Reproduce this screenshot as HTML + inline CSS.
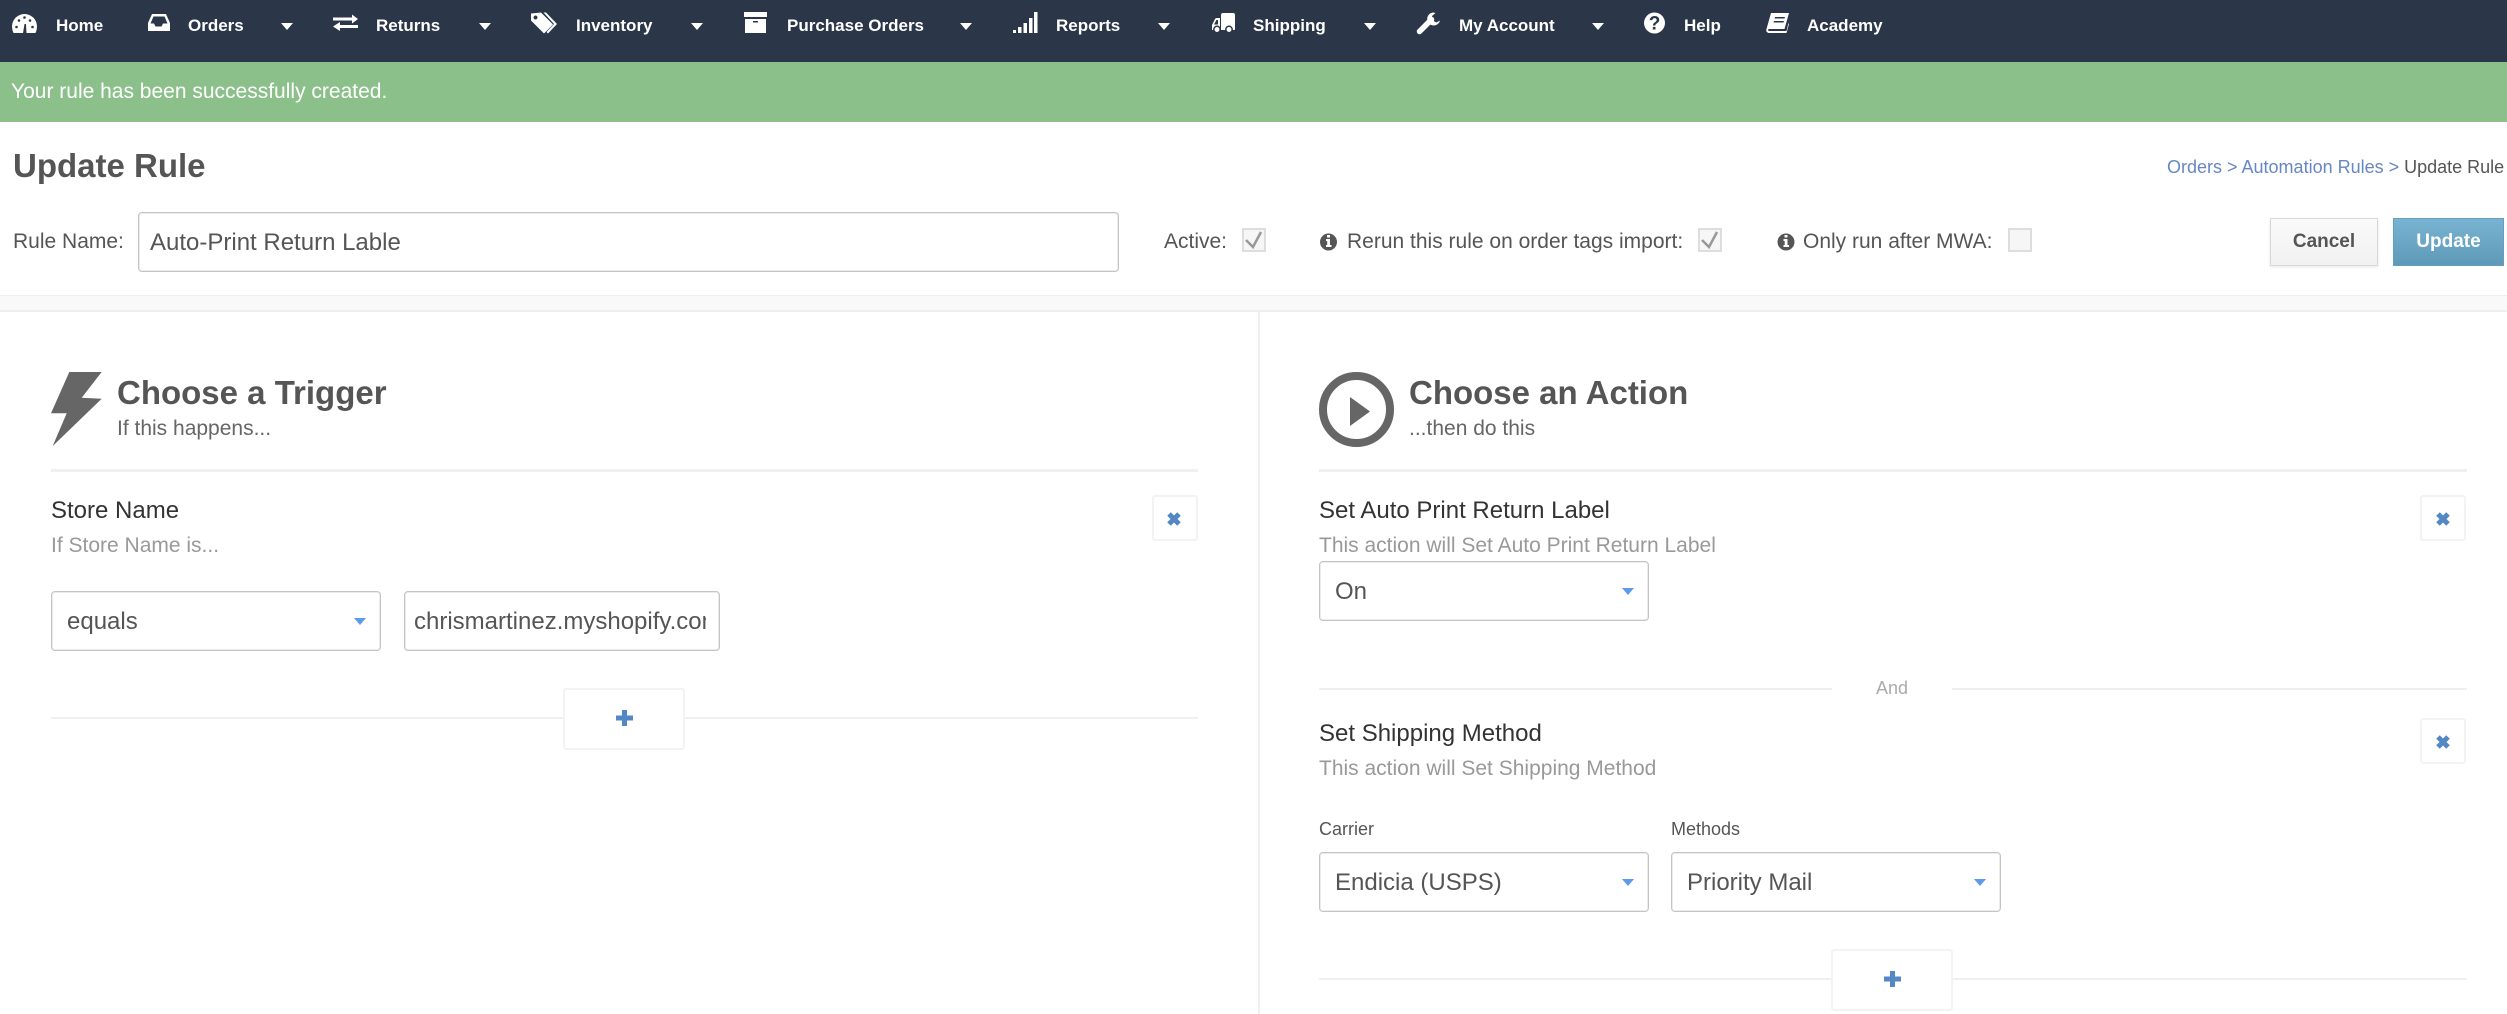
<!DOCTYPE html>
<html><head><meta charset="utf-8"><title>Update Rule</title>
<style>
html,body{margin:0;padding:0;background:#fff;width:2507px;height:1014px;overflow:hidden;font-family:"Liberation Sans",sans-serif;color:#555}
.a{position:absolute;white-space:nowrap}
.n{position:absolute;top:11px;line-height:30px;height:30px;font-size:17px;font-weight:700;color:#fff;white-space:nowrap}
.c{position:absolute;top:23px;width:0;height:0;border-left:6px solid transparent;border-right:6px solid transparent;border-top:7px solid #fff}
.box{position:absolute;box-sizing:border-box;border:1px solid #c4c4c4;box-shadow:inset 0 0 0 1px #ececec;border-radius:4px;background:#fff;font-size:24px;line-height:59px;padding-left:14px;color:#555;overflow:hidden;white-space:nowrap}
.sel{position:absolute;box-sizing:border-box;border:1px solid #c4c4c4;box-shadow:inset 0 0 0 1px #ececec;border-radius:4px;background:#fff;font-size:24px;line-height:59px;padding-left:15px;color:#555;white-space:nowrap;width:330px;height:60px}
.sel:after{content:"";position:absolute;right:14px;top:26px;width:0;height:0;border-left:6px solid transparent;border-right:6px solid transparent;border-top:7px solid #5b9bea}
.cb{position:absolute;box-sizing:border-box;top:228px;width:24px;height:24px;border:2px solid #ddd;background:#f6f6f6}
.t{font-size:24px;color:#333;line-height:30px}
.s{font-size:21px;color:#999;line-height:30px}
.h{font-size:33px;font-weight:700;color:#555;line-height:40px}
.sub{font-size:21px;color:#666;line-height:30px}
.l{font-size:21px;color:#555;line-height:30px}
.hr{position:absolute;background:#f0f0f0}
.xb{position:absolute;box-sizing:border-box;width:46px;height:46px;border:2px solid #f3f3f3;border-radius:3px;background:#fff}
.pb{position:absolute;box-sizing:border-box;width:122px;height:62px;border:2px solid #f3f3f3;border-radius:3px;background:#fff}
</style></head><body>

<div class="a" style="left:0;top:0;width:2507px;height:62px;background:#2b3648"></div>
<svg class="a" style="left:0;top:0" width="2507" height="62" viewBox="0 0 2507 62" fill="#fff">
<!-- home gauge -->
<path d="M13.500 33q-1.500-3-1.500-6.500a12.500 12.500 0 0 1 25 0q0 3.500-1.500 6.500z"/>
<g fill="#2b3648"><circle cx="16.500" cy="27" r="1.300"/><circle cx="19" cy="20.500" r="1.300"/><circle cx="24.500" cy="17.500" r="1.300"/><circle cx="30" cy="20.500" r="1.300"/><circle cx="32.500" cy="27" r="1.300"/><path d="M23 33l1.500-9h1.500l.5 9z"/></g>
<!-- inbox -->
<path d="M152 14h14l4 9v8h-22v-8z"/><path fill="#2b3648" d="M153.500 16.500h11l3 7h-4.500l-1.500 3h-6l-1.500-3h-3.500z"/>
<!-- exchange -->
<path d="M333 17.500h19v-3l6 4.500-6 4.500v-3h-19zM358 25h-18v-3l-7 4.500 7 4.500v-3h18z"/>
<!-- tags -->
<path fill-rule="evenodd" d="M531 13.500l10-1 12 12-9 9-13-13zM535.500 15.500a2 2 0 1 0 .01 0z"/>
<path d="M546 12.500l11 11.500-9 9.500-1.500-1.500 7.500-8-10.500-11.500z"/>
<!-- archive -->
<path d="M744 12h23v5h-23zM745 19h21v14h-21z"/><path fill="#2b3648" d="M753 21h5v1.500h-5z"/>
<!-- reports -->
<path d="M1013 30h3v3h-3zM1018 27h3.500v6h-3.500zM1023.500 23h3.500v10h-3.500zM1029 18h3.500v15h-3.500zM1034 12h3.500v21h-3.500z"/>
<!-- truck -->
<path d="M1221 15q0-2 2-2h10q2 0 2 2v14q0 1-1 1h-13zM1220 18v12h-8v-5l3-6q.5-1 1.500-1z"/>
<path fill="#2b3648" d="M1214 24.500l2.500-4.500h1.500v4.500z"/>
<circle cx="1217" cy="29.500" r="3.200" stroke="#2b3648" stroke-width="1.500"/><circle cx="1229" cy="29.500" r="3.200" stroke="#2b3648" stroke-width="1.500"/>
<!-- wrench -->
<path d="M1419.500 31.500l12-12" stroke="#fff" stroke-width="5.500" stroke-linecap="round"/>
<path d="M1433 12.500a6.500 6.500 0 1 0 7 8l-3.500 2-4-2-.5-4.500 3.500-3z"/>
<!-- help -->
<circle cx="1654.500" cy="23" r="10.500"/>
<text x="1654.500" y="29.500" text-anchor="middle" font-family="Liberation Sans" font-weight="700" font-size="19" fill="#2b3648">?</text>
<!-- book -->
<path d="M1771 13h18l-4.500 16h-16q-1 2 .5 2h17.500l2-8 .5 1-2.500 9h-18q-3-1-2-4z"/>
<path fill="#2b3648" d="M1775 17h10l-.5 1.500h-10zM1774 21h10l-.5 1.500h-10z"/>
</svg>

<div class="n" style="left:56px">Home</div>
<div class="n" style="left:188px">Orders</div><div class="c" style="left:281px"></div>
<div class="n" style="left:376px">Returns</div><div class="c" style="left:479px"></div>
<div class="n" style="left:576px">Inventory</div><div class="c" style="left:691px"></div>
<div class="n" style="left:787px">Purchase Orders</div><div class="c" style="left:960px"></div>
<div class="n" style="left:1056px">Reports</div><div class="c" style="left:1158px"></div>
<div class="n" style="left:1253px">Shipping</div><div class="c" style="left:1364px"></div>
<div class="n" style="left:1459px">My Account</div><div class="c" style="left:1592px"></div>
<div class="n" style="left:1684px">Help</div>
<div class="n" style="left:1807px">Academy</div>

<div class="a" style="left:0;top:62px;width:2507px;height:60px;background:#8cc08b"></div>
<div class="a" style="left:11px;top:77px;line-height:30px;font-size:21px;color:#fff">Your rule has been successfully created.</div>

<div class="a" style="left:13px;top:146px;line-height:40px;font-size:33px;font-weight:700;color:#555">Update Rule</div>
<div class="a" style="left:2167px;top:152px;line-height:30px;font-size:18px;color:#555"><span style="color:#6787c4">Orders &gt; Automation Rules &gt;</span> Update Rule</div>

<div class="a l" style="left:13px;top:227px">Rule Name:</div>
<div class="box" style="left:138px;top:212px;width:981px;height:60px;font-size:24px;padding-left:11px">Auto-Print Return Lable</div>

<div class="a l" style="left:1164px;top:227px">Active:</div>
<div class="cb" style="left:1242px"></div>
<div class="a l" style="left:1347px;top:227px">Rerun this rule on order tags import:</div>
<div class="cb" style="left:1698px"></div>
<div class="a l" style="left:1803px;top:227px">Only run after MWA:</div>
<div class="cb" style="left:2008px"></div>

<svg class="a" style="left:0;top:0" width="2507" height="300" viewBox="0 0 2507 300">
<path d="M1246 240l7 7 8-15" fill="none" stroke="#999" stroke-width="2.500"/>
<path d="M1702 240l7 7 8-15" fill="none" stroke="#999" stroke-width="2.500"/>
<circle cx="1328.500" cy="242" r="8.500" fill="#555"/>
<path d="M1327 235h3v2.500h-3zM1326 239h4v6h1.500v2h-5.500v-2h1.200v-4h-1.200z" fill="#fff"/>
<circle cx="1786" cy="242" r="8.500" fill="#555"/>
<path d="M1784.500 235h3v2.500h-3zM1783.500 239h4v6h1.500v2h-5.500v-2h1.200v-4h-1.200z" fill="#fff"/>
</svg>

<div class="a" style="left:2270px;top:218px;width:108px;height:48px;box-sizing:border-box;border:1px solid #d8d8d8;background:linear-gradient(#fafafa,#f1f1f1);box-shadow:0 1px 3px rgba(0,0,0,.1);text-align:center;line-height:46px;font-size:19px;font-weight:700;color:#555">Cancel</div>
<div class="a" style="left:2393px;top:218px;width:111px;height:48px;box-sizing:border-box;border:1px solid #659fbe;background:linear-gradient(#78b4d2,#5f99b8);text-align:center;line-height:46px;font-size:19px;font-weight:700;color:#fff">Update</div>

<div class="a" style="left:0;top:295px;width:2507px;height:17px;box-sizing:border-box;background:#f9f9f9;border-top:1px solid #eee;border-bottom:2px solid #eee"></div>
<div class="hr" style="left:1258px;top:312px;width:2px;height:702px"></div>

<!-- trigger -->
<svg class="a" style="left:0;top:0" width="1500" height="500" viewBox="0 0 1500 500">
<path d="M69.300 372h32.400l-20 25.700 20 1-49 47.300 14-32.700h-15.700z" fill="#666"/>
<circle cx="1356.500" cy="409.500" r="33.500" fill="none" stroke="#666" stroke-width="8"/>
<path d="M1350 397l20 14.500-20 14.500z" fill="#666"/>
</svg>
<div class="a h" style="left:117px;top:373px">Choose a Trigger</div>
<div class="a sub" style="left:117px;top:414px">If this happens...</div>
<div class="hr" style="left:51px;top:469px;width:1147px;height:3px"></div>
<div class="a t" style="left:51px;top:496px">Store Name</div>
<div class="a s" style="left:51px;top:531px">If Store Name is...</div>
<div class="xb" style="left:1152px;top:495px"></div>
<div class="sel" style="left:51px;top:591px">equals</div>
<div class="box" style="left:404px;top:591px;width:316px;height:60px;padding:0 11px 0 9px"><div style="overflow:hidden;width:292px">chrismartinez.myshopify.com</div></div>
<div class="hr" style="left:51px;top:717px;width:1147px;height:2px"></div>
<div class="pb" style="left:563px;top:688px"></div>

<!-- action -->
<div class="a h" style="left:1409px;top:373px">Choose an Action</div>
<div class="a sub" style="left:1409px;top:414px">...then do this</div>
<div class="hr" style="left:1319px;top:469px;width:1148px;height:3px"></div>
<div class="a t" style="left:1319px;top:496px">Set Auto Print Return Label</div>
<div class="a s" style="left:1319px;top:531px">This action will Set Auto Print Return Label</div>
<div class="xb" style="left:2420px;top:495px"></div>
<div class="sel" style="left:1319px;top:561px">On</div>

<div class="hr" style="left:1319px;top:688px;width:513px;height:2px"></div>
<div class="hr" style="left:1952px;top:688px;width:515px;height:2px"></div>
<div class="a" style="left:1832px;top:673px;width:120px;text-align:center;font-size:18px;line-height:30px;color:#aaa">And</div>

<div class="a t" style="left:1319px;top:719px">Set Shipping Method</div>
<div class="a s" style="left:1319px;top:754px">This action will Set Shipping Method</div>
<div class="xb" style="left:2420px;top:718px"></div>
<div class="a" style="left:1319px;top:814px;font-size:18px;line-height:30px;color:#555">Carrier</div>
<div class="a" style="left:1671px;top:814px;font-size:18px;line-height:30px;color:#555">Methods</div>
<div class="sel" style="left:1319px;top:852px">Endicia (USPS)</div>
<div class="sel" style="left:1671px;top:852px">Priority Mail</div>
<div class="hr" style="left:1319px;top:978px;width:1148px;height:2px"></div>
<div class="pb" style="left:1831px;top:949px"></div>

<svg class="a" style="left:0;top:0" width="2507" height="1014" viewBox="0 0 2507 1014" fill="none" stroke="#5388c4" stroke-width="5">
<path d="M1169 514l10 10m0-10l-10 10"/>
<path d="M2438 514l10 10m0-10l-10 10"/>
<path d="M2438 737l10 10m0-10l-10 10"/>
<path d="M624.500 710v16M616 718h17"/>
<path d="M1892.500 971v16M1884 979h17"/>
</svg>
</body></html>
